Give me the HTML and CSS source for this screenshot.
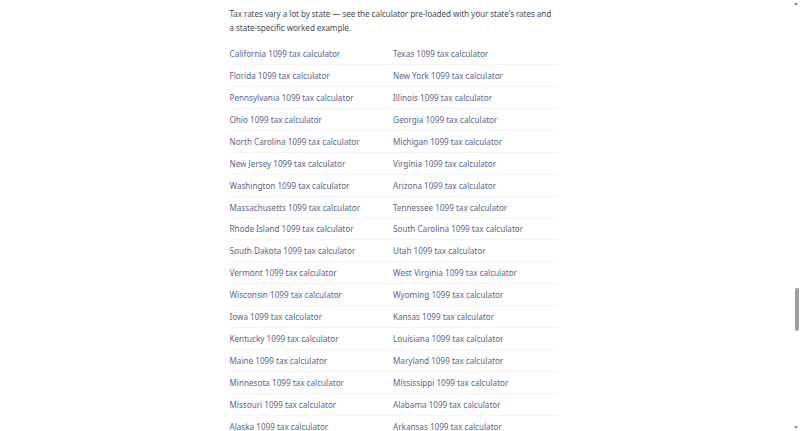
FILE: index.html
```html
<!DOCTYPE html>
<html lang="en">
<head>
<meta charset="utf-8">
<title>State 1099 tax calculators</title>
<link rel="stylesheet" href="styles.css">
</head>
<body>
<main class="content">
  <p class="intro">Tax rates vary a lot by state — see the calculator pre-loaded with your state's rates and a state-specific worked example.</p>
  <ul class="states">
    <li><a href="#">California 1099 tax calculator</a></li>
    <li><a href="#">Texas 1099 tax calculator</a></li>
    <li><a href="#">Florida 1099 tax calculator</a></li>
    <li><a href="#">New York 1099 tax calculator</a></li>
    <li><a href="#">Pennsylvania 1099 tax calculator</a></li>
    <li><a href="#">Illinois 1099 tax calculator</a></li>
    <li><a href="#">Ohio 1099 tax calculator</a></li>
    <li><a href="#">Georgia 1099 tax calculator</a></li>
    <li><a href="#">North Carolina 1099 tax calculator</a></li>
    <li><a href="#">Michigan 1099 tax calculator</a></li>
    <li><a href="#">New Jersey 1099 tax calculator</a></li>
    <li><a href="#">Virginia 1099 tax calculator</a></li>
    <li><a href="#">Washington 1099 tax calculator</a></li>
    <li><a href="#">Arizona 1099 tax calculator</a></li>
    <li><a href="#">Massachusetts 1099 tax calculator</a></li>
    <li><a href="#">Tennessee 1099 tax calculator</a></li>
    <li><a href="#">Rhode Island 1099 tax calculator</a></li>
    <li><a href="#">South Carolina 1099 tax calculator</a></li>
    <li><a href="#">South Dakota 1099 tax calculator</a></li>
    <li><a href="#">Utah 1099 tax calculator</a></li>
    <li><a href="#">Vermont 1099 tax calculator</a></li>
    <li><a href="#">West Virginia 1099 tax calculator</a></li>
    <li><a href="#">Wisconsin 1099 tax calculator</a></li>
    <li><a href="#">Wyoming 1099 tax calculator</a></li>
    <li><a href="#">Iowa 1099 tax calculator</a></li>
    <li><a href="#">Kansas 1099 tax calculator</a></li>
    <li><a href="#">Kentucky 1099 tax calculator</a></li>
    <li><a href="#">Louisiana 1099 tax calculator</a></li>
    <li><a href="#">Maine 1099 tax calculator</a></li>
    <li><a href="#">Maryland 1099 tax calculator</a></li>
    <li><a href="#">Minnesota 1099 tax calculator</a></li>
    <li><a href="#">Mississippi 1099 tax calculator</a></li>
    <li><a href="#">Missouri 1099 tax calculator</a></li>
    <li><a href="#">Alabama 1099 tax calculator</a></li>
    <li><a href="#">Alaska 1099 tax calculator</a></li>
    <li><a href="#">Arkansas 1099 tax calculator</a></li>
  </ul>
</main>
<div class="scrollbar" aria-hidden="true">
  <span class="arrow arrow-up"></span>
  <span class="thumb"></span>
  <span class="arrow arrow-down"></span>
</div>
</body>
</html>
```
FILE: styles.css
```css
html, body {
  margin: 0;
  padding: 0;
  background: #ffffff;
  overflow: hidden;
}

body {
  padding-right: 14px;
  font-family: "Noto Sans", "Open Sans", sans-serif;
  color: #4b4f58;
}

.content {
  width: 327px;
  margin: 0 auto;
  padding-top: 7px;
}

.intro {
  margin: 0 0 9px;
  font-size: 8.15px;
  line-height: 13.5px;
  letter-spacing: -0.08px;
  color: #4a4e57;
}

.states {
  list-style: none;
  margin: 0;
  padding: 0;
  display: grid;
  grid-template-columns: 1fr 1fr;
}

.states li {
  height: 21.94px;
  box-sizing: border-box;
  display: flex;
  align-items: center;
  border-bottom: 1px solid #f1f2f5;
}

.states a {
  font-size: 8.15px;
  color: #5b6690;
  text-decoration: none;
}

.scrollbar {
  position: fixed;
  top: 0;
  right: 0;
  width: 8px;
  height: 100%;
}

.thumb {
  position: absolute;
  top: 288px;
  right: 1px;
  width: 4px;
  height: 43px;
  border-radius: 2px;
  background: #9d9d9d;
}

.arrow {
  position: absolute;
  right: 2px;
  width: 0;
  height: 0;
  border-left: 2px solid transparent;
  border-right: 2px solid transparent;
}

.arrow-up {
  top: 2px;
  border-bottom: 3px solid #8a8a8a;
}

.arrow-down {
  bottom: 2px;
  border-top: 3px solid #8a8a8a;
}
```
